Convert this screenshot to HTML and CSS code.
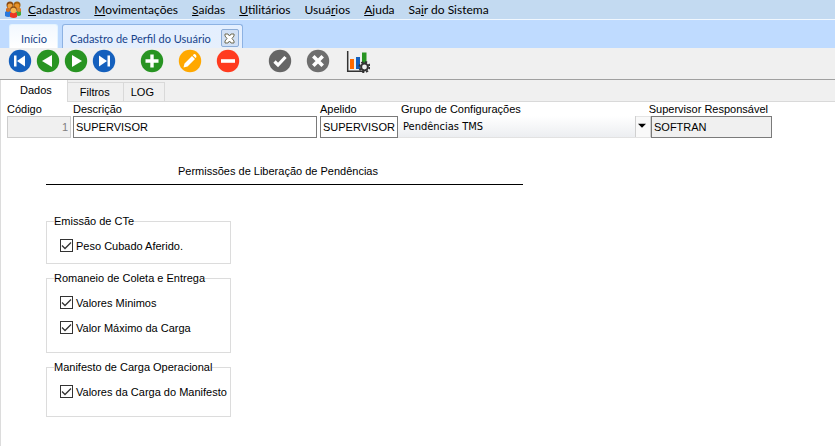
FILE: index.html
```html
<!DOCTYPE html>
<html lang="pt-BR">
<head>
    <meta charset="UTF-8">
    <meta name="viewport" content="width=device-width, initial-scale=1.0">
    <title>Cadastro de Perfil do Usuário</title>
    <link rel="stylesheet" href="styles.css">
</head>
<body>
    <header>
        <nav class="menu-bar">
            <svg class="logo" viewBox="0 0 17 17" aria-hidden="true">
                <path d="M1 11V8q2-2 4 0v5H2zM16 11V8q-2-2-4 0v5h3z" fill="#e0521f"/>
                <path d="M0 15v-4q3-3 6 0l1 4q-4 2-7 0z" fill="#2878dc"/>
                <path d="M11 14v-3q3-3 5 0v3q-2 2-5 0z" fill="#43a83b"/>
                <path d="M5 16v-4q4-3 7 0v4q-3 2-7 0z" fill="#ed3524"/>
                <circle cx="5" cy="4" r="3.5" fill="#8a4a12"/>
                <circle cx="12" cy="4" r="3.5" fill="#a36212"/>
                <circle cx="5" cy="5" r="2.5" fill="#f0a13c"/>
                <circle cx="12" cy="5" r="2.5" fill="#e89228"/>
                <circle cx="3" cy="9" r="2" fill="#ce7423"/>
                <circle cx="14" cy="9" r="2" fill="#d98a2b"/>
                <circle cx="8.5" cy="8.5" r="3.3" fill="#8b5016"/>
                <circle cx="8.5" cy="9.5" r="2.7" fill="#f7b64f"/>
            </svg>
            <a href="#"><u>C</u>adastros</a>
            <a href="#"><u>M</u>ovimentações</a>
            <a href="#"><u>S</u>aídas</a>
            <a href="#"><u>U</u>tilitários</a>
            <a href="#">Usuá<u>r</u>ios</a>
            <a href="#"><u>A</u>juda</a>
            <a href="#">Sa<u>i</u>r do Sistema</a>
        </nav>
        <div class="window-tabs">
            <a href="#" class="window-tab home">Início</a>
            <div class="window-tab">
                <a href="#">Cadastro de Perfil do Usuário</a>
                <button type="button" class="close" aria-label="Fechar">
                    <svg viewBox="0 0 11 11"><path d="M1 1h3l1.5 2L7 1h3v2L8 5.500 10 8v2H7L5.500 8 4 10H1V8l2-2.500L1 3z" fill="#fff" stroke="#6f6b52" stroke-width="1"/></svg>
                </button>
            </div>
        </div>
    </header>

    <div class="toolbar">
        <div class="tool-group">
            <button type="button" aria-label="Primeiro">
                <svg viewBox="0 0 24 24"><circle cx="12" cy="12" r="11.2" fill="#1560bd"/><path d="M6 6.500h2.500v11H6zM17 6.500v11L9 12z" fill="#fff"/></svg>
            </button>
            <button type="button" aria-label="Anterior">
                <svg viewBox="0 0 24 24"><circle cx="12" cy="12" r="11.2" fill="#289422"/><path d="M16 6v12L6 12z" fill="#fff"/></svg>
            </button>
            <button type="button" aria-label="Próximo">
                <svg viewBox="0 0 24 24"><circle cx="12" cy="12" r="11.2" fill="#289422"/><path d="M8 6v12l10-6z" fill="#fff"/></svg>
            </button>
            <button type="button" aria-label="Último">
                <svg viewBox="0 0 24 24"><circle cx="12" cy="12" r="11.2" fill="#1560bd"/><path d="M7 6.500v11l8-5.500zM15.500 6.500H18v11h-2.500z" fill="#fff"/></svg>
            </button>
        </div>
        <div class="tool-group edit">
            <button type="button" aria-label="Incluir">
                <svg viewBox="0 0 24 24"><circle cx="12" cy="12" r="11.2" fill="#289422"/><path d="M10.300 5.500h3.400v4.800h4.800v3.400h-4.800v4.800h-3.400v-4.800H5.500v-3.400h4.800z" fill="#fff"/></svg>
            </button>
            <button type="button" aria-label="Alterar">
                <svg viewBox="0 0 24 24"><circle cx="12" cy="12" r="11.2" fill="#ffa800"/><path d="M5.500 18.500l1-4 7.500-7.500 3 3-7.500 7.500zM14.800 6.200l1-1q1-.5 2 .5t.5 2.500l-.8.800z" fill="#fff"/></svg>
            </button>
            <button type="button" aria-label="Excluir">
                <svg viewBox="0 0 24 24"><circle cx="12" cy="12" r="11.2" fill="#ff3b1f"/><path d="M5 10.200h14v3.600H5z" fill="#fff"/></svg>
            </button>
        </div>
        <div class="tool-group edit">
            <button type="button" aria-label="Confirmar">
                <svg viewBox="0 0 24 24"><circle cx="12" cy="12" r="11.2" fill="#666"/><path d="M6.500 12.500l3.500 3.500 7.500-8" fill="none" stroke="#fff" stroke-width="3.2"/></svg>
            </button>
            <button type="button" aria-label="Cancelar">
                <svg viewBox="0 0 24 24"><circle cx="12" cy="12" r="11.2" fill="#6e6e6e"/><path d="M7.300 7.300l9.400 9.400M16.700 7.300l-9.400 9.400" stroke="#fff" stroke-width="3.6"/></svg>
            </button>
        </div>
        <button type="button" aria-label="Relatórios">
            <svg viewBox="0 0 24 24">
                <path d="M1.700 2v20.200H17" fill="none" stroke="#333" stroke-width="1.5"/>
                <path d="M4 10h4v10H4z" fill="#ff6a00"/>
                <path d="M10 8h4v12h-4z" fill="#1560bd"/>
                <path d="M16 3.500h4.500V15H16z" fill="#289422"/>
                <circle cx="18.5" cy="18" r="5" fill="none" stroke="#333" stroke-width="2" stroke-dasharray="2.1 1.827"/>
                <circle cx="18.5" cy="18" r="3.400" fill="#f0f0f0" stroke="#333" stroke-width="2"/>
            </svg>
        </button>
    </div>

    <main>
        <div class="page-tabs">
            <button type="button" class="page-tab active">Dados</button>
            <button type="button" class="page-tab">Filtros</button>
            <button type="button" class="page-tab">LOG</button>
        </div>

        <form>
            <div class="fields">
                <div class="field codigo">
                    <label for="codigo">Código</label>
                    <input type="text" id="codigo" value="1" disabled>
                </div>
                <div class="field descricao">
                    <label for="descricao">Descrição</label>
                    <input type="text" id="descricao" value="SUPERVISOR">
                </div>
                <div class="field apelido">
                    <label for="apelido">Apelido</label>
                    <input type="text" id="apelido" value="SUPERVISOR">
                </div>
                <div class="field grupo">
                    <label for="grupo">Grupo de Configurações</label>
                    <select id="grupo">
                        <option>Pendências TMS</option>
                    </select>
                </div>
                <div class="field supervisor">
                    <label for="supervisor">Supervisor Responsável</label>
                    <input type="text" id="supervisor" value="SOFTRAN" readonly>
                </div>
            </div>

            <section class="permissions">
                <h2>Permissões de Liberação de Pendências</h2>
                <fieldset class="compact">
                    <legend>Emissão de CTe</legend>
                    <label><input type="checkbox" checked>Peso Cubado Aferido.</label>
                </fieldset>
                <fieldset>
                    <legend>Romaneio de Coleta e Entrega</legend>
                    <label><input type="checkbox" checked>Valores Minimos</label>
                    <label><input type="checkbox" checked>Valor Máximo da Carga</label>
                </fieldset>
                <fieldset>
                    <legend>Manifesto de Carga Operacional</legend>
                    <label><input type="checkbox" checked>Valores da Carga do Manifesto</label>
                </fieldset>
            </section>
        </form>
    </main>
</body>
</html>
```
FILE: styles.css
```css
/* General Reset */
* {
    box-sizing: border-box;
}

body {
    display: flex;
    flex-direction: column;
    min-height: 100vh;
    margin: 0;
    font-family: "Liberation Sans", Arial, sans-serif;
    font-size: 11px;
    color: #000;
    background-color: #fff;
}

a {
    color: inherit;
    text-decoration: none;
}

button {
    padding: 0;
    border: 0;
    background: none;
    font: inherit;
    color: inherit;
}

svg {
    display: block;
}

/* Menu */
.menu-bar {
    display: flex;
    align-items: center;
    gap: 14px;
    height: 20px;
    padding-left: 5px;
    background-color: #c3daf1;
    border-bottom: 1px solid #f1f7fe;
    font-family: Lato, "Open Sans", sans-serif;
    font-size: 12px;
    white-space: nowrap;
}

.logo {
    width: 17px;
    height: 17px;
    margin-right: -8px;
}

/* Open windows */
.window-tabs {
    display: flex;
    align-items: flex-end;
    gap: 4px;
    height: 28px;
    padding-left: 9px;
    background-color: #bfdbff;
    font-family: Lato, "Open Sans", sans-serif;
    font-size: 11px;
    color: #15428b;
    white-space: nowrap;
}

.window-tab {
    display: flex;
    align-items: center;
    gap: 10px;
    height: 24px;
    padding: 3px 3px 0 7px;
    border: 1px solid #8db2e3;
    border-bottom: 0;
    border-radius: 3px 3px 0 0;
    background: linear-gradient(#e4efff, #e6effc);
}

.window-tab.home {
    padding: 3px 10px 0 11px;
    border-color: #e5f4ff;
    background: linear-gradient(#f2f8ff, #fff);
}

.close {
    display: flex;
    align-items: center;
    justify-content: center;
    width: 18px;
    height: 18px;
    border: 1px solid #8cacd6;
    border-radius: 2px;
    background-color: #d1e0f5;
}

.close svg {
    width: 11px;
    height: 11px;
}

/* Toolbar */
.toolbar {
    display: flex;
    align-items: flex-start;
    gap: 16px;
    height: 32px;
    padding: 1px 0 0 8px;
    background-color: #f0f0f0;
    border-bottom: 1px solid #a0a0a0;
}

.toolbar svg {
    width: 24px;
    height: 24px;
}

.tool-group {
    display: flex;
    gap: 4px;
    margin-right: 8px;
}

.tool-group.edit {
    gap: 14px;
    margin-right: 0;
}

.tool-group.edit + .tool-group.edit {
    margin-left: 12px;
}

/* Page tabs */
main {
    flex: 1;
    border-left: 1px solid #dcdcdc;
}

.page-tabs {
    display: flex;
    align-items: flex-end;
    height: 22px;
    background: linear-gradient(#f0f0f0 21px, #d9d9d9 21px);
}

.page-tab {
    height: 20px;
    padding: 0 13px 0 12px;
    border: 1px solid #d9d9d9;
    border-left: 0;
}

.page-tab:last-child {
    padding: 0 10px 0 7px;
}

.page-tab.active {
    height: 22px;
    padding: 0 15px 2px 19px;
    border-top: 0;
    border-bottom: 0;
    background-color: #fff;
}

/* Record fields */
.fields {
    display: flex;
    padding: 1px 0 0 6px;
}

.field {
    display: flex;
    flex-direction: column;
}

.field label {
    height: 13px;
    line-height: 13px;
    white-space: nowrap;
}

.field input,
.field select {
    width: 100%;
    height: 22px;
    margin: 0;
    padding: 0 2px 1px;
    border: 1px solid #7a7a7a;
    border-radius: 0;
    background-color: #fff;
    font: inherit;
    color: #000;
}

.field input:disabled {
    border-color: #ccc;
    background-color: #f0f0f0;
    color: #808080;
    text-align: right;
}

.field input:read-only:not(:disabled) {
    background-color: #f0f0f0;
}

.codigo {
    width: 64px;
    margin-right: 2px;
}

.descricao {
    width: 244px;
    margin-right: 3px;
}

.apelido {
    width: 78px;
}

.grupo {
    width: 253px;
}

.grupo label {
    padding-left: 3px;
}

.field select {
    appearance: none;
    padding-left: 5px;
    border: 0;
    border-bottom: 1px solid #e2e2e2;
    background: url("data:image/svg+xml,%3Csvg xmlns='http://www.w3.org/2000/svg' width='16' height='22'%3E%3Cpath d='M.5 .5h15v21H.5z' fill='%23f9f9f9' stroke='%23d0d0d0'/%3E%3Cpath d='M3 8h8l-4 4z'/%3E%3C/svg%3E") no-repeat right, linear-gradient(#fff, #eceef1);
    font-family: "DejaVu Sans Condensed", "Open Sans", sans-serif;
}

.supervisor {
    width: 121px;
}

.supervisor label {
    align-self: flex-end;
    padding-right: 4px;
}

/* Permissions */
.permissions {
    width: 477px;
    margin: 27px 0 0 45px;
}

.permissions h2 {
    margin: 0 0 30px;
    padding: 0 0 6px 132px;
    border-bottom: 1px solid #000;
    font-size: 11px;
    font-weight: normal;
    line-height: 13px;
}

fieldset {
    width: 185px;
    margin: 0 0 8px;
    padding: 5px 0 12px 13px;
    border: 1px solid #dcdcdc;
}

fieldset.compact {
    padding-bottom: 5px;
}

legend {
    margin-left: -6px;
    padding: 0;
    line-height: 13px;
}

fieldset label {
    display: flex;
    align-items: center;
    gap: 3px;
    height: 25px;
    white-space: nowrap;
}

fieldset input {
    appearance: none;
    width: 13px;
    height: 13px;
    margin: 0;
    border: 1px solid #333;
    background-color: #fff;
}

fieldset input:checked {
    background-image: url("data:image/svg+xml,%3Csvg xmlns='http://www.w3.org/2000/svg' width='11' height='11'%3E%3Cpath d='M1 5.500l3 3 6-6' fill='none' stroke='%23333' stroke-width='1.300'/%3E%3C/svg%3E");
}
```
